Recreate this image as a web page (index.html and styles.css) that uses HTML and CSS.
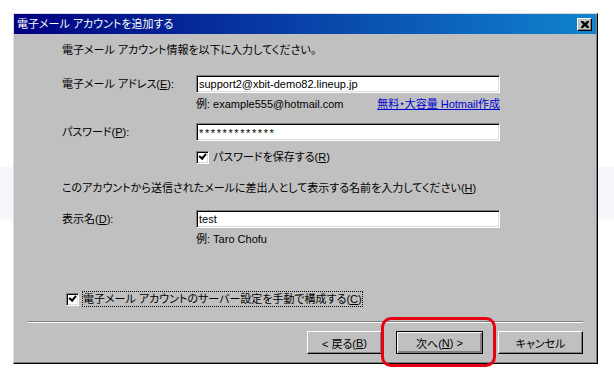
FILE: index.html
```html
<!DOCTYPE html>
<html lang="ja">
<head>
    <meta charset="UTF-8">
    <title>電子メール アカウントを追加する</title>
    <link rel="stylesheet" href="styles.css">
</head>
<body>
    <div class="window">
        <!-- Title Bar -->
        <div class="titlebar">
            <span class="title">電子メール アカウントを追加する</span>
            <span class="close-btn">
                <svg width="8" height="7" viewBox="0 0 8 7">
                    <path d="M0 0h2l2 2 2-2h2v1L6 3.5 8 6v1H6L4 5 2 7H0V6l2-2.5L0 1z" fill="#000"/>
                </svg>
            </span>
        </div>

        <div class="content">
            <p class="intro">電子メール アカウント情報を以下に入力してください。</p>

            <!-- Account Form -->
            <div class="form-grid">
                <label class="field-label">電子メール アドレス(<u>E</u>):</label>
                <div class="text-box">support2@xbit-demo82.lineup.jp</div>

                <span></span>
                <div class="hint-row">
                    <span>例: example555@hotmail.com</span>
                    <a href="#" class="link">無料・大容量 Hotmail作成</a>
                </div>

                <label class="field-label row-pass">パスワード(<u>P</u>):</label>
                <div class="text-box row-pass password">*************</div>

                <span></span>
                <div class="check-row">
                    <span class="checkbox checked"></span>
                    <span>パスワードを保存する(<u>R</u>)</span>
                </div>
            </div>

            <p class="section-text">このアカウントから送信されたメールに差出人として表示する名前を入力してください(<u>H</u>)</p>

            <div class="form-grid">
                <label class="field-label row-name">表示名(<u>D</u>):</label>
                <div class="text-box row-name">test</div>

                <span></span>
                <div class="hint-row">例: Taro Chofu</div>
            </div>
        </div>

        <!-- Footer Area -->
        <div class="bottom">
            <div class="check-row manual">
                <span class="checkbox checked"></span>
                <span class="focus-text">電子メール アカウントのサーバー設定を手動で構成する(<u>C</u>)</span>
            </div>
            <div class="separator"></div>
            <div class="buttons">
                <span class="btn">&lt; 戻る(<u>B</u>)</span>
                <span class="btn btn-default">次へ(<u>N</u>) &gt;</span>
                <span class="btn btn-cancel">キャンセル</span>
            </div>
        </div>

        <!-- Highlight -->
        <div class="highlight"></div>
    </div>
</body>
</html>
```

FILE: styles.css
```css
/* Page */
html, body {
    margin: 0;
    height: 100%;
}

body {
    font-family: 'Liberation Sans', 'Noto Sans CJK JP', sans-serif;
    font-size: 11px;
    color: #000;
    background: linear-gradient(to bottom, #fff 167px, #f5f7fb 167px, #f5f7fb 220px, #fff 220px);
    font-feature-settings: "palt";
}

/* Dialog Window */
.window {
    position: relative;
    margin: 13px 0 0 13px;
    width: 585px;
    height: 351px;
    box-sizing: border-box;
    background-color: #c0c0c0;
    border-top: 1px solid #dcdcdc;
    border-left: 1px solid #dcdcdc;
    border-right: 1px solid #000;
    border-bottom: 1px solid #000;
    box-shadow: inset -1px -1px 0 #808080;
    display: flex;
    flex-direction: column;
}

.titlebar {
    height: 20px;
    margin-right: 1px;
    background: linear-gradient(to right, #000080, #1084d0);
    display: flex;
    align-items: center;
    justify-content: space-between;
    padding: 0 4px 0 3px;
}

    .titlebar .title {
        color: #fff;
        line-height: 20px;
    }

.close-btn {
    width: 15px;
    height: 13px;
    box-sizing: border-box;
    background-color: #c0c0c0;
    border-top: 1px solid #fff;
    border-left: 1px solid #fff;
    border-right: 1px solid #000;
    border-bottom: 1px solid #000;
    box-shadow: inset -1px -1px 0 #808080;
    display: flex;
    align-items: center;
    justify-content: center;
}

/* Content */
.content {
    padding: 9px 0 0 48px;
}

p {
    margin: 0;
    line-height: 14px;
}

.form-grid {
    display: grid;
    grid-template-columns: 134px 304px;
    align-items: center;
}

.intro + .form-grid {
    margin-top: 18px;
}

.field-label {
    line-height: 14px;
}

.text-box {
    height: 18px;
    box-sizing: border-box;
    background-color: #fff;
    border-top: 1px solid #808080;
    border-left: 1px solid #808080;
    border-right: 1px solid #fff;
    border-bottom: 1px solid #fff;
    box-shadow: inset 1px 1px 0 #000, inset -1px -1px 0 #dcdcdc;
    padding: 0 0 0 2px;
    line-height: 16px;
}

    .text-box.password {
        letter-spacing: 1.6px;
        line-height: 18px;
    }

.hint-row {
    margin-top: 4px;
    line-height: 14px;
    display: flex;
    justify-content: space-between;
}

.link {
    color: #0000d0;
    text-decoration: underline;
}

.row-pass {
    margin-top: 12px;
}

.row-name {
    margin-top: 15px;
}

.check-row {
    margin-top: 9px;
    display: flex;
    align-items: center;
    gap: 4px;
    line-height: 14px;
}

.checkbox {
    width: 13px;
    height: 13px;
    box-sizing: border-box;
    background-color: #fff;
    border-top: 1px solid #808080;
    border-left: 1px solid #808080;
    border-right: 1px solid #fff;
    border-bottom: 1px solid #fff;
    box-shadow: inset 1px 1px 0 #000, inset -1px -1px 0 #dcdcdc;
    position: relative;
}

    .checkbox.checked::after {
        content: "";
        position: absolute;
        left: 3px;
        top: 2px;
        width: 5px;
        height: 3px;
        border-left: 2px solid #000;
        border-bottom: 2px solid #000;
        transform: rotate(-50deg);
        transform-origin: 30% 60%;
    }

.section-text {
    margin-top: 17px;
}

/* Bottom Area */
.bottom {
    margin-top: auto;
    padding: 0 14px 9px 14px;
}

.manual {
    margin: 0 0 0 38px;
}

.focus-text {
    outline: 1px dotted #000;
    outline-offset: 0;
}

.separator {
    margin-top: 15px;
    height: 1px;
    background-color: #808080;
    border-bottom: 1px solid #fff;
}

.buttons {
    margin-top: 8px;
    display: flex;
    justify-content: flex-end;
}

.btn {
    width: 75px;
    height: 23px;
    box-sizing: border-box;
    background-color: #c0c0c0;
    border-top: 1px solid #fff;
    border-left: 1px solid #fff;
    border-right: 1px solid #000;
    border-bottom: 1px solid #000;
    box-shadow: inset -1px -1px 0 #808080;
    display: flex;
    align-items: center;
    justify-content: center;
}

.btn-default {
    margin-left: 14px;
    border: 1px solid #000;
    box-shadow: inset 1px 1px 0 #fff, inset -2px -2px 0 #808080;
    width: 87px;
}

.btn-cancel {
    margin-left: 15px;
    width: 85px;
}

/* Red highlight over the next button */
.highlight {
    position: absolute;
    left: 367px;
    top: 303px;
    width: 115px;
    height: 50px;
    box-sizing: border-box;
    border: 3px solid #e60012;
    border-radius: 10px;
}
```
